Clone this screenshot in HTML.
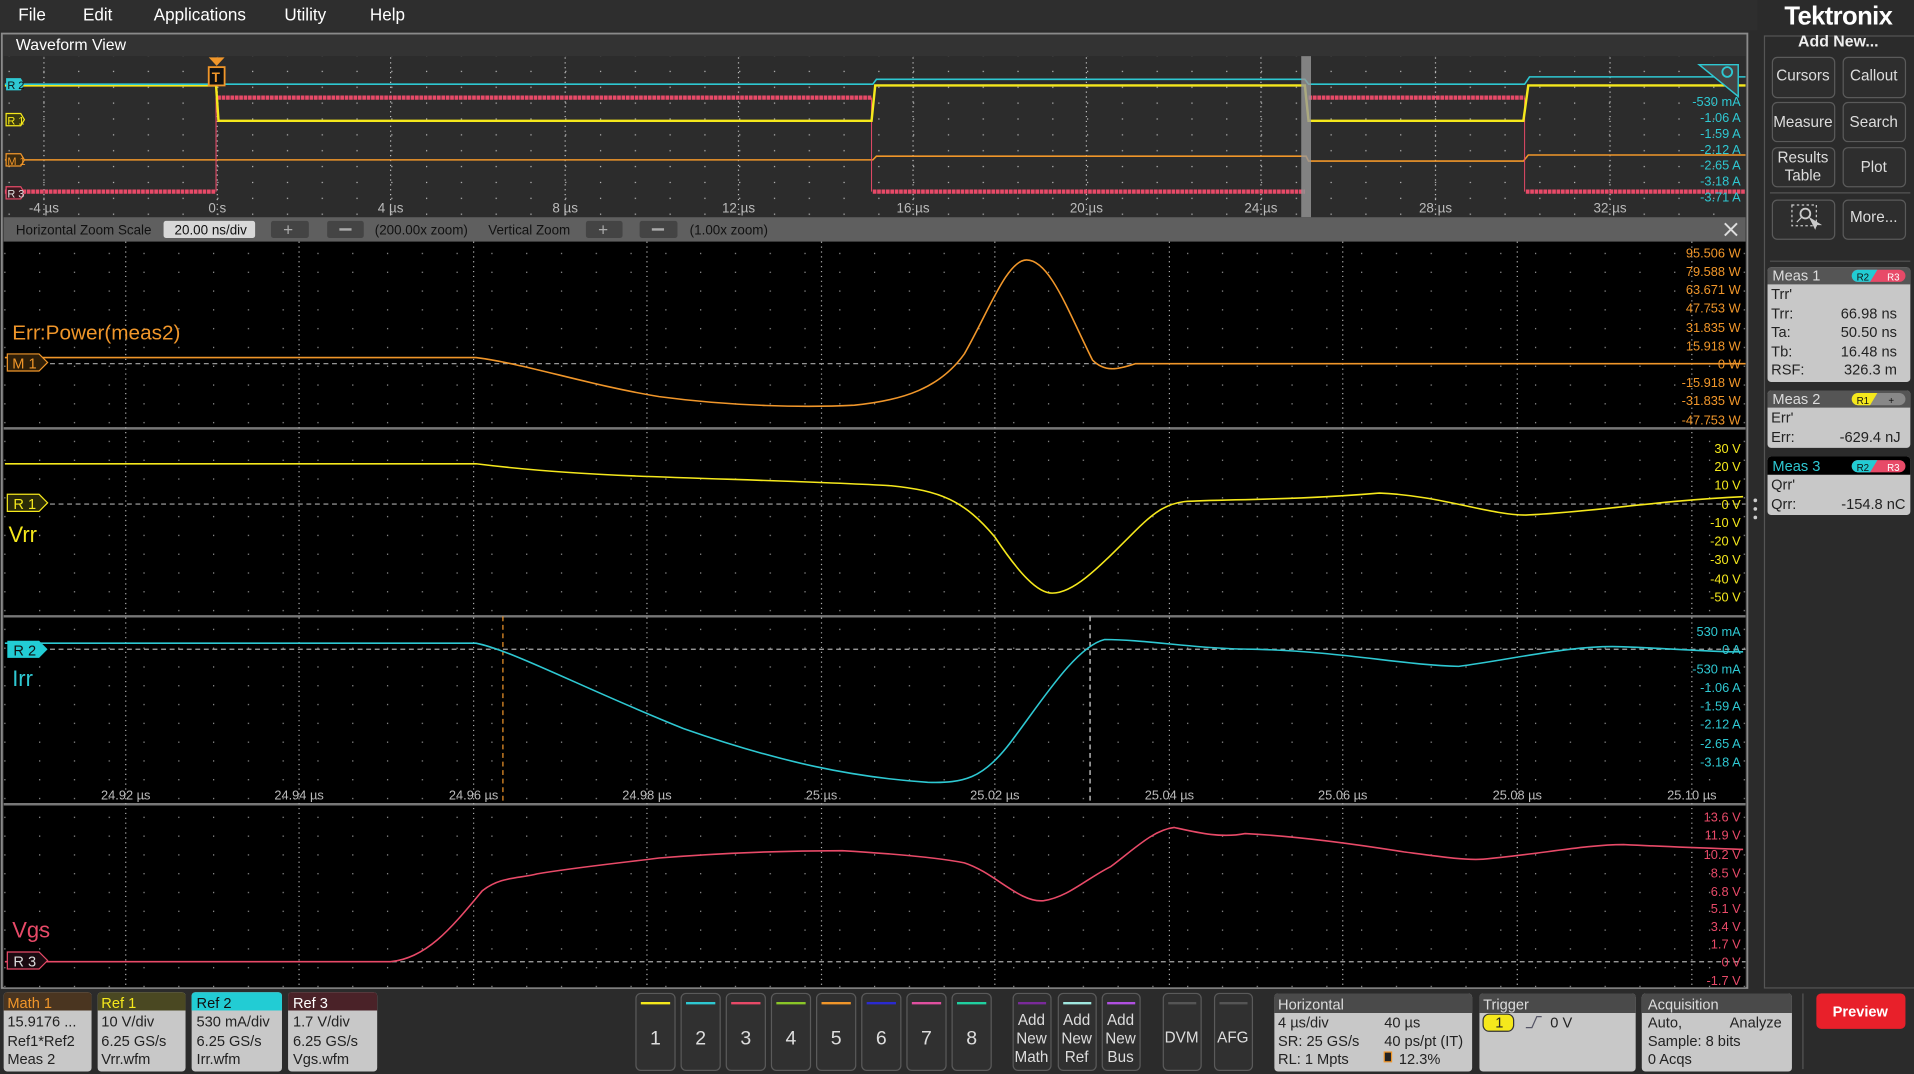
<!DOCTYPE html>
<html><head><meta charset="utf-8"><style>
html,body{margin:0;padding:0;background:#2a2a2a;overflow:hidden}
svg{display:block}
text{font-family:"Liberation Sans","DejaVu Sans",sans-serif}
</style></head><body>
<svg width="1914" height="1074" viewBox="0 0 1568 880" preserveAspectRatio="none" xmlns="http://www.w3.org/2000/svg">
<defs>
<pattern id="dots" x="3.5" y="0" width="28.5" height="15.4" patternUnits="userSpaceOnUse"><rect x="0" y="7" width="1" height="1" fill="#9a9a9a"/></pattern>
<pattern id="dotsO" x="7" y="0" width="28.5" height="13" patternUnits="userSpaceOnUse"><rect x="0" y="6" width="1" height="1" fill="#bbb"/></pattern>
</defs>
<rect width="1568" height="880" fill="#2b2b2b"/>
<rect width="1440" height="25" fill="#2e2e2e"/>
<g fill="#fff" font-size="14">
<text x="15" y="17">File</text><text x="68" y="17">Edit</text><text x="126" y="17">Applications</text><text x="233" y="17">Utility</text><text x="303" y="17">Help</text>
</g>
<rect x="1.5" y="27.5" width="1430" height="782" fill="#333" stroke="#8a8a8a" stroke-width="1.5"/>
<text x="13" y="41" fill="#fff" font-size="13">Waveform View</text>
<rect x="3" y="46" width="1427" height="132" fill="#2c2c2c"/>
<rect x="3" y="46" width="1427" height="132" fill="url(#dotsO)"/>
<g stroke="#bbb" stroke-width="1" stroke-dasharray="1,3">
<line x1="36" y1="47" x2="36" y2="178"/><line x1="178" y1="47" x2="178" y2="178"/><line x1="320" y1="47" x2="320" y2="178"/><line x1="463" y1="47" x2="463" y2="178"/><line x1="605" y1="47" x2="605" y2="178"/><line x1="748" y1="47" x2="748" y2="178"/><line x1="890" y1="47" x2="890" y2="178"/><line x1="1033" y1="47" x2="1033" y2="178"/><line x1="1176" y1="47" x2="1176" y2="178"/><line x1="1319" y1="47" x2="1319" y2="178"/>
</g>
<g font-size="11" fill="#bbb" text-anchor="middle">
<text x="36" y="174">-4 µs</text><text x="178" y="174">0 s</text><text x="320" y="174">4 µs</text><text x="463" y="174">8 µs</text><text x="605" y="174">12 µs</text><text x="748" y="174">16 µs</text><text x="890" y="174">20 µs</text><text x="1033" y="174">24 µs</text><text x="1176" y="174">28 µs</text><text x="1319" y="174">32 µs</text>
</g>
<g fill="none" stroke-width="1.3">
<polyline stroke="#f0962a" points="4,131 715,131 718,128 1070,128 1072,132 1248,132 1252,127 1430,127"/>
<polyline stroke="#e84a68" stroke-width="0.8" points="177,157 177,80 M714,80"/>
<line x1="177" y1="80" x2="177" y2="157" stroke="#e84a68" stroke-width="0.8"/>
<line x1="714" y1="80" x2="714" y2="157" stroke="#e84a68" stroke-width="0.8"/>
<line x1="1249" y1="80" x2="1249" y2="157" stroke="#e84a68" stroke-width="0.8"/>
<g stroke="#e84a68" stroke-width="3.5" stroke-dasharray="3,0.6">
<line x1="4" y1="157" x2="177" y2="157"/><line x1="178" y1="80" x2="714" y2="80"/><line x1="715" y1="157" x2="1069" y2="157"/><line x1="1072" y1="80" x2="1249" y2="80"/><line x1="1250" y1="157" x2="1430" y2="157"/>
</g>
<polyline stroke="#f5e81c" stroke-width="2" points="4,70 177,70 179,99 714,99 717,70 1069,70 1072,99 1248,99 1252,70 1430,70"/>
<polyline stroke="#2ec8d2" points="4,69 715,69 718,65 1069,65 1072,69 1249,69 1253,63 1430,63"/>
</g>
<rect x="1066" y="46" width="8" height="132" fill="#999" opacity="0.8"/>
<g font-size="10.5" fill="#2ec8d2" text-anchor="end">
<text x="1426" y="87">-530 mA</text><text x="1426" y="100">-1.06 A</text><text x="1426" y="113">-1.59 A</text><text x="1426" y="126">-2.12 A</text><text x="1426" y="139">-2.65 A</text><text x="1426" y="152">-3.18 A</text><text x="1426" y="165">-3.71 A</text>
</g>
<path d="M1392,53 L1424,53 L1424,79 Z" fill="#444" stroke="#2ec8d2" stroke-width="1.2"/>
<circle cx="1415" cy="59" r="4" fill="none" stroke="#2ec8d2" stroke-width="1.5"/>
<path d="M5,64 h12 l3,5 l-3,5 h-12z" fill="#2ec8d2"/><text x="6" y="73" font-size="9" fill="#111">R 2</text>
<path d="M5,93 h12 l3,5 l-3,5 h-12z" fill="#3a3a10" stroke="#f5e81c"/><text x="6" y="102" font-size="9" fill="#f5e81c">R 1</text>
<path d="M5,126 h12 l3,5 l-3,5 h-12z" fill="#3a2a10" stroke="#f0962a"/><text x="6" y="135" font-size="9" fill="#f0962a">M 1</text>
<path d="M5,153 h12 l3,5 l-3,5 h-12z" fill="#3a1a20" stroke="#e84a68"/><text x="6" y="162" font-size="9" fill="#ddd">R 3</text>
<path d="M171,47 h13 l-6.5,7z" fill="#f0962a"/>
<rect x="171" y="55" width="13" height="15" fill="#111" stroke="#f0962a" stroke-width="1.5"/><text x="173.5" y="67" font-size="11" font-weight="bold" fill="#f0962a">T</text>
<rect x="3" y="178" width="1427" height="20" fill="#5f5f5f"/>
<g font-size="11" fill="#111">
<text x="13" y="192">Horizontal Zoom Scale</text>
<rect x="134" y="181" width="75" height="14" fill="#d8d8d8" rx="2"/><text x="143" y="192">20.00 ns/div</text>
<rect x="222" y="181" width="31" height="14" fill="#444" rx="2"/><text x="232" y="193" fill="#aaa" font-size="14">+</text>
<rect x="268" y="181" width="30" height="14" fill="#444" rx="2"/><rect x="278" y="187" width="10" height="2" fill="#aaa"/>
<text x="307" y="192">(200.00x zoom)</text>
<text x="400" y="192">Vertical Zoom</text>
<rect x="480" y="181" width="30" height="14" fill="#444" rx="2"/><text x="490" y="193" fill="#aaa" font-size="14">+</text>
<rect x="524" y="181" width="31" height="14" fill="#444" rx="2"/><rect x="534" y="187" width="10" height="2" fill="#aaa"/>
<text x="565" y="192">(1.00x zoom)</text>
</g>
<path d="M1413,183 l10,10 M1423,183 l-10,10" stroke="#ddd" stroke-width="1.6"/>
<rect x="3" y="198" width="1427" height="611" fill="#000"/>
<rect x="3" y="198" width="1427" height="611" fill="url(#dots)"/>
<g stroke="#777" stroke-width="2"><line x1="3" y1="351" x2="1430" y2="351"/><line x1="3" y1="505" x2="1430" y2="505"/><line x1="3" y1="659" x2="1430" y2="659"/></g>
<g stroke="#aaa" stroke-width="1" stroke-dasharray="1,3">
<line x1="103" y1="198" x2="103" y2="809"/><line x1="245" y1="198" x2="245" y2="809"/><line x1="388" y1="198" x2="388" y2="809"/><line x1="530" y1="198" x2="530" y2="809"/><line x1="673" y1="198" x2="673" y2="809"/><line x1="815" y1="198" x2="815" y2="809"/><line x1="958" y1="198" x2="958" y2="809"/><line x1="1100" y1="198" x2="1100" y2="809"/><line x1="1243" y1="198" x2="1243" y2="809"/><line x1="1386" y1="198" x2="1386" y2="809"/>
</g>
<g stroke="#aaa" stroke-width="1" stroke-dasharray="4,3">
<line x1="20" y1="298" x2="1430" y2="298"/><line x1="20" y1="413" x2="1430" y2="413"/><line x1="20" y1="532" x2="1430" y2="532"/><line x1="20" y1="788" x2="1430" y2="788"/>
</g>
<line x1="412" y1="505" x2="412" y2="659" stroke="#f0962a" stroke-dasharray="4,3"/>
<line x1="893" y1="505" x2="893" y2="659" stroke="#ddd" stroke-dasharray="4,3"/>
<g fill="none" stroke-width="1.3">
<path stroke="#f0962a" d="M4,293 L390,293 C430,298 480,315 540,325 C600,333 660,334 700,332 C740,328 770,318 790,290 C810,255 825,213 841,213 C860,213 875,255 895,295 C905,305 915,303 930,298 L1430,298"/>
<path stroke="#f5e81c" d="M4,380 L390,380 C430,385 470,388 520,390 C600,393 680,395 730,398 C770,402 790,410 815,440 C835,470 850,486 862,486 C880,486 900,465 930,435 C945,420 955,413 970,411 C1000,409 1060,410 1130,404 C1180,406 1220,422 1250,422 C1300,420 1360,410 1428,407"/>
<path stroke="#2ec8d2" d="M4,527 L390,527 C420,533 480,565 560,597 C640,625 700,637 760,641 C790,642 805,637 825,612 C850,580 880,530 905,524 C940,524 980,532 1030,532 C1100,534 1150,545 1195,546 C1240,540 1290,528 1330,530 C1380,532 1420,535 1428,534"/>
<path stroke="#e84a68" d="M4,788 L320,788 C350,785 370,760 395,730 C410,718 425,720 440,716 C470,711 500,708 540,703 C590,699 640,697 690,697 C740,700 770,703 790,707 C815,715 835,740 855,738 C875,735 890,720 910,710 C930,695 945,680 962,678 C980,682 1000,687 1020,683 C1060,685 1100,690 1150,698 C1180,702 1200,705 1215,704 C1260,700 1300,692 1330,692 C1370,694 1400,695 1428,696"/>
</g>
<text x="10" y="278" font-size="17" fill="#f0962a">Err:Power(meas2)</text>
<text x="7" y="444" font-size="18" fill="#f5e81c">Vrr</text>
<text x="10" y="562" font-size="18" fill="#2ec8d2">Irr</text>
<text x="10" y="768" font-size="18" fill="#e84a68">Vgs</text>
<path d="M6,290 h26 l7,7 l-7,7 h-26z" fill="#2e1e08" stroke="#f0962a"/><text x="10" y="302" font-size="12" fill="#f0962a">M 1</text>
<path d="M6,405 h26 l7,7 l-7,7 h-26z" fill="#2a2a08" stroke="#f5e81c"/><text x="11" y="417" font-size="12" fill="#f5e81c">R 1</text>
<path d="M6,525 h26 l7,7 l-7,7 h-26z" fill="#22ccd4"/><text x="11" y="537" font-size="12" fill="#111">R 2</text>
<path d="M6,780 h26 l7,7 l-7,7 h-26z" fill="#1a0a10" stroke="#e84a68"/><text x="11" y="792" font-size="12" fill="#ddd">R 3</text>
<g font-size="10.5" text-anchor="end">
<g fill="#f0962a"><text x="1426" y="211">95.506 W</text><text x="1426" y="226">79.588 W</text><text x="1426" y="241">63.671 W</text><text x="1426" y="256">47.753 W</text><text x="1426" y="272">31.835 W</text><text x="1426" y="287">15.918 W</text><text x="1426" y="302">0 W</text><text x="1426" y="317">-15.918 W</text><text x="1426" y="332">-31.835 W</text><text x="1426" y="348">-47.753 W</text></g>
<g fill="#f5e81c"><text x="1426" y="371">30 V</text><text x="1426" y="386">20 V</text><text x="1426" y="401">10 V</text><text x="1426" y="417">0 V</text><text x="1426" y="432">-10 V</text><text x="1426" y="447">-20 V</text><text x="1426" y="462">-30 V</text><text x="1426" y="478">-40 V</text><text x="1426" y="493">-50 V</text></g>
<g fill="#2ec8d2"><text x="1426" y="521">530 mA</text><text x="1426" y="536">0 A</text><text x="1426" y="552">-530 mA</text><text x="1426" y="567">-1.06 A</text><text x="1426" y="582">-1.59 A</text><text x="1426" y="597">-2.12 A</text><text x="1426" y="613">-2.65 A</text><text x="1426" y="628">-3.18 A</text></g>
<g fill="#e84a68"><text x="1426" y="673">13.6 V</text><text x="1426" y="688">11.9 V</text><text x="1426" y="704">10.2 V</text><text x="1426" y="719">8.5 V</text><text x="1426" y="734">6.8 V</text><text x="1426" y="748">5.1 V</text><text x="1426" y="763">3.4 V</text><text x="1426" y="777">1.7 V</text><text x="1426" y="792">0 V</text><text x="1426" y="807">-1.7 V</text></g>
</g>
<g font-size="10.5" fill="#bbb" text-anchor="middle">
<text x="103" y="655">24.92 µs</text><text x="245" y="655">24.94 µs</text><text x="388" y="655">24.96 µs</text><text x="530" y="655">24.98 µs</text><text x="673" y="655">25 µs</text><text x="815" y="655">25.02 µs</text><text x="958" y="655">25.04 µs</text><text x="1100" y="655">25.06 µs</text><text x="1243" y="655">25.08 µs</text><text x="1386" y="655">25.10 µs</text>
</g>
<g fill="#ccc"><circle cx="1438" cy="410" r="1.5"/><circle cx="1438" cy="417" r="1.5"/><circle cx="1438" cy="424" r="1.5"/></g>
<g font-size="12">
<rect x="3" y="813" width="72" height="65" rx="3" fill="#c8c8c8"/><path d="M3,828 v-12 a3,3 0 0 1 3,-3 h66 a3,3 0 0 1 3,3 v12z" fill="#4a3520"/><text x="6" y="826" fill="#f0962a">Math 1</text>
<text x="6" y="841" fill="#222">15.9176 ...</text><text x="6" y="857" fill="#222">Ref1*Ref2</text><text x="6" y="872" fill="#222">Meas 2</text>
<rect x="80" y="813" width="72" height="65" rx="3" fill="#c8c8c8"/><path d="M80,828 v-12 a3,3 0 0 1 3,-3 h66 a3,3 0 0 1 3,3 v12z" fill="#4a4822"/><text x="83" y="826" fill="#f5e81c">Ref 1</text>
<text x="83" y="841" fill="#222">10 V/div</text><text x="83" y="857" fill="#222">6.25 GS/s</text><text x="83" y="872" fill="#222">Vrr.wfm</text>
<rect x="157" y="813" width="74" height="65" rx="3" fill="#c8c8c8"/><path d="M157,828 v-12 a3,3 0 0 1 3,-3 h68 a3,3 0 0 1 3,3 v12z" fill="#22ccd4"/><text x="161" y="826" fill="#111">Ref 2</text>
<text x="161" y="841" fill="#222">530 mA/div</text><text x="161" y="857" fill="#222">6.25 GS/s</text><text x="161" y="872" fill="#222">Irr.wfm</text>
<rect x="236" y="813" width="73" height="65" rx="3" fill="#c8c8c8"/><path d="M236,828 v-12 a3,3 0 0 1 3,-3 h67 a3,3 0 0 1 3,3 v12z" fill="#4a2228"/><text x="240" y="826" fill="#fff">Ref 3</text>
<text x="240" y="841" fill="#222">1.7 V/div</text><text x="240" y="857" fill="#222">6.25 GS/s</text><text x="240" y="872" fill="#222">Vgs.wfm</text>
</g>
<g stroke="#5a5a5a" fill="#303030">
<rect x="521" y="814" width="32" height="63" rx="4"/><rect x="558" y="814" width="32" height="63" rx="4"/><rect x="595" y="814" width="32" height="63" rx="4"/><rect x="632" y="814" width="32" height="63" rx="4"/><rect x="669" y="814" width="32" height="63" rx="4"/><rect x="706" y="814" width="32" height="63" rx="4"/><rect x="743" y="814" width="32" height="63" rx="4"/><rect x="780" y="814" width="32" height="63" rx="4"/>
<rect x="830" y="814" width="31" height="63" rx="4"/><rect x="867" y="814" width="31" height="63" rx="4"/><rect x="903" y="814" width="31" height="63" rx="4"/>
<rect x="953" y="814" width="31" height="63" rx="4"/><rect x="995" y="814" width="31" height="63" rx="4"/>
</g>
<g stroke-width="2">
<line x1="525" y1="822" x2="549" y2="822" stroke="#f5e81c"/><line x1="562" y1="822" x2="586" y2="822" stroke="#2ec8d2"/><line x1="599" y1="822" x2="623" y2="822" stroke="#e84a68"/><line x1="636" y1="822" x2="660" y2="822" stroke="#8ac628"/><line x1="673" y1="822" x2="697" y2="822" stroke="#f0962a"/><line x1="710" y1="822" x2="734" y2="822" stroke="#2a2ad0"/><line x1="747" y1="822" x2="771" y2="822" stroke="#e050a0"/><line x1="784" y1="822" x2="808" y2="822" stroke="#20d0a0"/>
<line x1="834" y1="822" x2="857" y2="822" stroke="#7a2a9a"/><line x1="871" y1="822" x2="894" y2="822" stroke="#a0e8e0"/><line x1="907" y1="822" x2="930" y2="822" stroke="#b050e0"/>
<line x1="957" y1="822" x2="980" y2="822" stroke="#555"/><line x1="999" y1="822" x2="1022" y2="822" stroke="#555"/>
</g>
<g font-size="16" fill="#ddd" text-anchor="middle">
<text x="537" y="856">1</text><text x="574" y="856">2</text><text x="611" y="856">3</text><text x="648" y="856">4</text><text x="685" y="856">5</text><text x="722" y="856">6</text><text x="759" y="856">7</text><text x="796" y="856">8</text>
</g>
<g font-size="12.5" fill="#ddd" text-anchor="middle">
<text x="845" y="840">Add</text><text x="845" y="855">New</text><text x="845" y="870">Math</text>
<text x="882" y="840">Add</text><text x="882" y="855">New</text><text x="882" y="870">Ref</text>
<text x="918" y="840">Add</text><text x="918" y="855">New</text><text x="918" y="870">Bus</text>
<text x="968" y="854">DVM</text><text x="1010" y="854">AFG</text>
</g>
<g font-size="12">
<rect x="1044" y="814" width="162" height="64" rx="3" fill="#c8c8c8"/><path d="M1044,830 v-13 a3,3 0 0 1 3,-3 h156 a3,3 0 0 1 3,3 v13z" fill="#4a4a4a"/><text x="1047" y="827" fill="#ddd">Horizontal</text>
<text x="1047" y="842" fill="#222">4 µs/div</text><text x="1134" y="842" fill="#222">40 µs</text><text x="1047" y="857" fill="#222">SR: 25 GS/s</text><text x="1134" y="857" fill="#222">40 ps/pt (IT)</text><text x="1047" y="872" fill="#222">RL: 1 Mpts</text><rect x="1134" y="862" width="6" height="8" fill="#222" stroke="#f0962a"/><text x="1146" y="872" fill="#222">12.3%</text>
<rect x="1212" y="814" width="128" height="64" rx="3" fill="#c8c8c8"/><path d="M1212,830 v-13 a3,3 0 0 1 3,-3 h122 a3,3 0 0 1 3,3 v13z" fill="#4a4a4a"/><text x="1215" y="827" fill="#ddd">Trigger</text>
<rect x="1215" y="831" width="25" height="14" rx="5" fill="#f5e81c" stroke="#333"/><text x="1225" y="842" fill="#222">1</text><path d="M1250,842 l5,0 l4,-9 l4,0" stroke="#556" fill="none"/><text x="1270" y="842" fill="#222">0 V</text>
<rect x="1345" y="814" width="123" height="64" rx="3" fill="#c8c8c8"/><path d="M1345,830 v-13 a3,3 0 0 1 3,-3 h117 a3,3 0 0 1 3,3 v13z" fill="#4a4a4a"/><text x="1350" y="827" fill="#ddd">Acquisition</text>
<text x="1350" y="842" fill="#222">Auto,</text><text x="1417" y="842" fill="#222">Analyze</text><text x="1350" y="857" fill="#222">Sample: 8 bits</text><text x="1350" y="872" fill="#222">0 Acqs</text>
</g>
<line x1="1477" y1="814" x2="1477" y2="876" stroke="#555"/>
<rect x="1488" y="814" width="73" height="29" rx="4" fill="#e8202a"/><text x="1524" y="833" font-size="12" font-weight="bold" fill="#fff" text-anchor="middle">Preview</text>
<text x="1506" y="20" font-size="21" font-weight="bold" fill="#fff" text-anchor="middle" letter-spacing="-0.5">Tektronix</text>
<rect x="1445.5" y="29.5" width="125" height="780" fill="#2b2b2b" stroke="#555"/>
<text x="1506" y="38" font-size="13" font-weight="bold" fill="#eee" text-anchor="middle">Add New...</text>
<g fill="#2e2e2e" stroke="#5a5a5a">
<rect x="1452" y="47" width="51" height="33" rx="4"/><rect x="1510" y="47" width="51" height="33" rx="4"/>
<rect x="1452" y="84" width="51" height="32" rx="4"/><rect x="1510" y="84" width="51" height="32" rx="4"/>
<rect x="1452" y="121" width="51" height="32" rx="4"/><rect x="1510" y="121" width="51" height="32" rx="4"/>
<rect x="1452" y="164" width="51" height="32" rx="4"/><rect x="1510" y="164" width="51" height="32" rx="4"/>
</g>
<g stroke="#555"><line x1="1450" y1="158" x2="1565" y2="158"/><line x1="1450" y1="214" x2="1565" y2="214"/></g>
<g font-size="12.5" fill="#ddd" text-anchor="middle">
<text x="1477" y="66">Cursors</text><text x="1535" y="66">Callout</text><text x="1477" y="104">Measure</text><text x="1535" y="104">Search</text>
<text x="1477" y="133">Results</text><text x="1477" y="148">Table</text><text x="1535" y="141">Plot</text><text x="1535" y="182">More...</text>
</g>
<rect x="1468" y="168" width="20" height="17" fill="none" stroke="#ccc" stroke-dasharray="2,2"/><circle cx="1479" cy="175" r="4" fill="none" stroke="#ccc" stroke-width="1.5"/><path d="M1476,178 l-4,4 M1483,179 l4,8 l1,-3 l3,0z" stroke="#ccc" fill="#ccc"/>
<g font-size="12">
<rect x="1448" y="219" width="117" height="94" rx="3" fill="#c8c8c8"/><path d="M1448,233 v-11 a3,3 0 0 1 3,-3 h111 a3,3 0 0 1 3,3 v11z" fill="#555"/><text x="1452" y="230" fill="#ddd">Meas 1</text>
<rect x="1517" y="221" width="44" height="10" rx="5" fill="#e84a68"/><path d="M1522,221 h16 l-6,10 h-10 a5,5 0 0 1 0,-10z" fill="#22ccd4"/><text x="1521" y="230" font-size="8" fill="#111">R2</text><text x="1546" y="230" font-size="8" fill="#fff">R3</text>
<text x="1451" y="245" fill="#222">Trr'</text><text x="1451" y="261" fill="#222">Trr:</text><text x="1554" y="261" fill="#222" text-anchor="end">66.98 ns</text>
<text x="1451" y="276" fill="#222">Ta:</text><text x="1554" y="276" fill="#222" text-anchor="end">50.50 ns</text>
<text x="1451" y="292" fill="#222">Tb:</text><text x="1554" y="292" fill="#222" text-anchor="end">16.48 ns</text>
<text x="1451" y="307" fill="#222">RSF:</text><text x="1554" y="307" fill="#222" text-anchor="end">326.3 m</text>
<rect x="1448" y="320" width="117" height="47" rx="3" fill="#c8c8c8"/><path d="M1448,334 v-11 a3,3 0 0 1 3,-3 h111 a3,3 0 0 1 3,3 v11z" fill="#555"/><text x="1452" y="331" fill="#ddd">Meas 2</text>
<rect x="1517" y="322" width="44" height="10" rx="5" fill="#888"/><path d="M1522,322 h16 l-6,10 h-10 a5,5 0 0 1 0,-10z" fill="#f5e81c"/><text x="1521" y="331" font-size="8" fill="#111">R1</text><text x="1547" y="331" font-size="8" fill="#111">+</text>
<text x="1451" y="346" fill="#222">Err'</text><text x="1451" y="362" fill="#222">Err:</text><text x="1557" y="362" fill="#222" text-anchor="end">-629.4 nJ</text>
<rect x="1448" y="374" width="117" height="48" rx="3" fill="#c8c8c8"/><path d="M1448,389 v-12 a3,3 0 0 1 3,-3 h111 a3,3 0 0 1 3,3 v12z" fill="#000"/><text x="1452" y="386" fill="#2ec8d2">Meas 3</text>
<rect x="1517" y="377" width="44" height="10" rx="5" fill="#e84a68"/><path d="M1522,377 h16 l-6,10 h-10 a5,5 0 0 1 0,-10z" fill="#22ccd4"/><text x="1521" y="386" font-size="8" fill="#111">R2</text><text x="1546" y="386" font-size="8" fill="#fff">R3</text>
<text x="1451" y="401" fill="#222">Qrr'</text><text x="1451" y="417" fill="#222">Qrr:</text><text x="1561" y="417" fill="#222" text-anchor="end">-154.8 nC</text>
</g>
</svg>
</body></html>
